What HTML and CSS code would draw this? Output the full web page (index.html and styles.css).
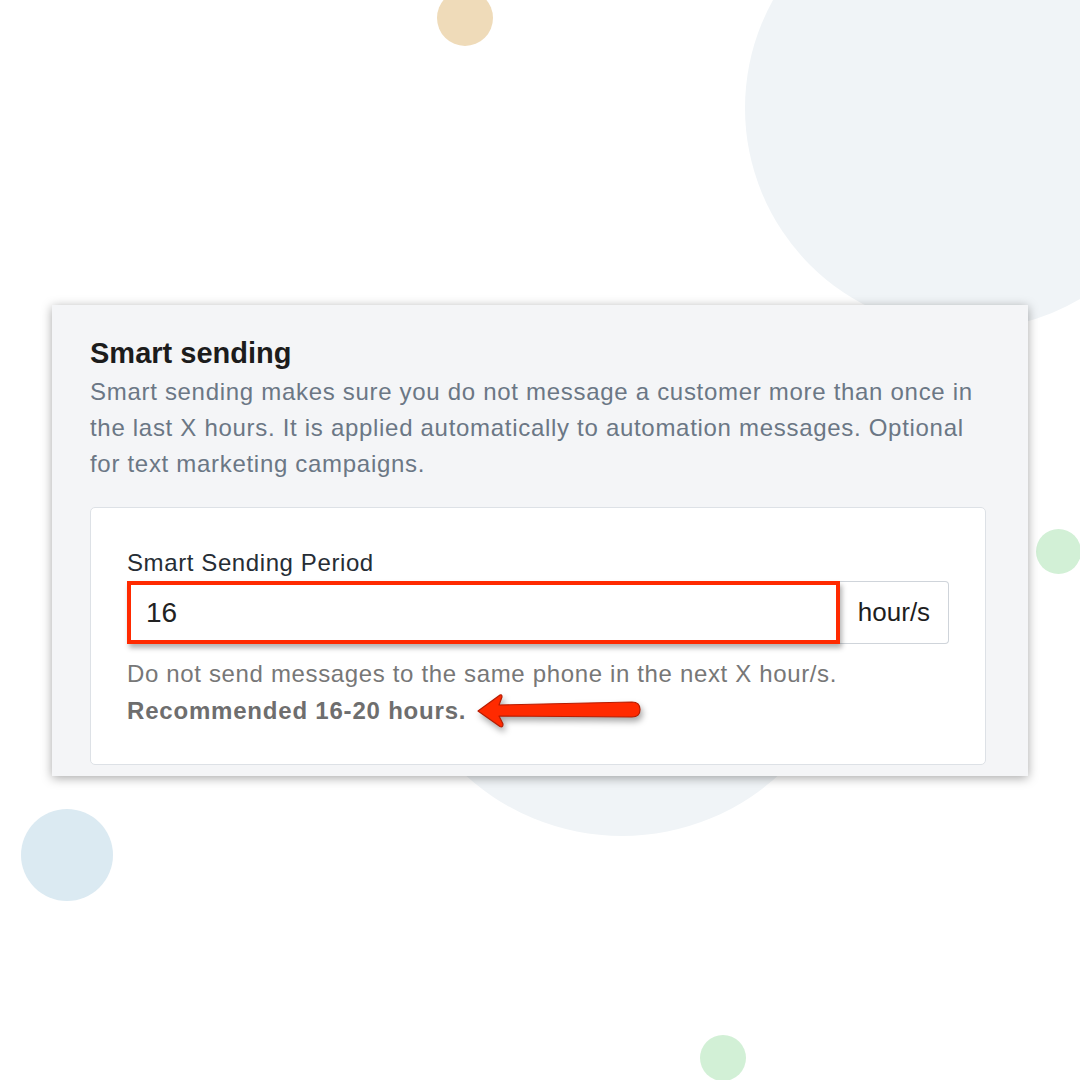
FILE: index.html
```html
<!DOCTYPE html>
<html lang="en">

<head>
    <meta charset="UTF-8">
    <meta name="viewport" content="width=device-width, initial-scale=1.0">
    <title>Smart sending</title>
    <link rel="stylesheet" href="styles.css">
</head>

<body>
    <div class="dots">
        <span class="dot dot-tan"></span>
        <span class="dot dot-big"></span>
        <span class="dot dot-mid"></span>
        <span class="dot dot-green-right"></span>
        <span class="dot dot-green-bottom"></span>
        <span class="dot dot-blue"></span>
    </div>

    <section class="panel">
        <h2>Smart sending</h2>
        <p class="intro">Smart sending makes sure you do not message a customer more than once in
            the last X hours. It is applied automatically to automation messages. Optional
            for text marketing campaigns.</p>

        <div class="card">
            <label class="field-label" for="period">Smart Sending Period</label>
            <div class="input-group">
                <input id="period" class="field-input" type="text" value="16">
                <span class="addon">hour/s</span>
            </div>
            <p class="help">Do not send messages to the same phone in the next X hour/s.</p>
            <p class="help help-strong">
                <b>Recommended 16-20 hours.</b>
                <svg class="arrow" width="170" height="40" viewBox="0 0 170 40">
                    <path d="M3 20 L25 4 Q27 3 27 6 L24 14 L157 11 Q165 11 165 18.5 Q165 26 157 26 L24 25 L28 33 Q28 37 25 35.5 Z"
                        fill="#ff2a00" stroke="#b81c00" stroke-width="1.2" stroke-linejoin="round" />
                </svg>
            </p>
        </div>
    </section>
</body>

</html>
```

FILE: styles.css
```css
html,
body {
    margin: 0px;
}

body {
    width: 1080px;
    height: 1080px;
    position: relative;
    background: #ffffff;
    font-family: "Liberation Sans", Arial, sans-serif;
}

.dots {
    position: absolute;
    inset: 0;
    overflow: hidden;
}

.dot {
    position: absolute;
    border-radius: 50%;
}

.dot-tan {
    left: 437px;
    top: -10px;
    width: 56px;
    height: 56px;
    background: #efdbb9;
}

.dot-big {
    left: 745px;
    top: -114px;
    width: 444px;
    height: 444px;
    background: #f0f4f7;
}

.dot-mid {
    left: 390px;
    top: 372px;
    width: 464px;
    height: 464px;
    background: #f0f4f7;
}

.dot-green-right {
    left: 1036px;
    top: 529px;
    width: 45px;
    height: 45px;
    background: #d2f0d6;
}

.dot-green-bottom {
    left: 700px;
    top: 1035px;
    width: 46px;
    height: 46px;
    background: #d2f0d6;
}

.dot-blue {
    left: 21px;
    top: 809px;
    width: 92px;
    height: 92px;
    background: #dbeaf2;
}

.panel {
    position: relative;
    margin: 305px 0 0 52px;
    width: 976px;
    box-sizing: border-box;
    padding: 31px 42px 11px 38px;
    background: #f4f5f7;
    box-shadow: 0px 2px 10px rgba(0, 0, 0, 0.35);
}

.panel h2 {
    margin: 0;
    font-size: 29px;
    line-height: 34px;
    color: #1c1c1c;
}

.intro {
    margin: 4px 0 25px 0;
    font-size: 24px;
    line-height: 36px;
    letter-spacing: 0.7px;
    color: #6b7785;
}

.card {
    background: #ffffff;
    border: 1px solid #dde1e6;
    border-radius: 5px;
    padding: 40px 36px 35px 36px;
}

.field-label {
    display: block;
    font-size: 24px;
    line-height: 30px;
    letter-spacing: 0.6px;
    color: #262d35;
    margin-bottom: 3px;
}

.input-group {
    display: flex;
    width: 822px;
    height: 63px;
}

.field-input {
    flex: 1;
    margin: 0;
    padding: 0 0 0 15px;
    border: 4px solid #ff2a00;
    outline: none;
    font-family: inherit;
    font-size: 28px;
    color: #222222;
    background: #ffffff;
    box-shadow: 2px 4px 5px rgba(0, 0, 0, 0.3);
    position: relative;
    z-index: 1;
}

.addon {
    display: flex;
    align-items: center;
    justify-content: center;
    width: 108px;
    border: 1px solid #cfd4da;
    border-left: none;
    border-radius: 0 4px 4px 0;
    font-size: 26px;
    color: #1e1e1e;
}

.help {
    margin: 0;
    font-size: 24px;
    line-height: 37px;
    letter-spacing: 0.65px;
    color: #777777;
}

.help:first-of-type {
    margin-top: 11px;
}

.help-strong {
    display: flex;
    align-items: center;
    letter-spacing: 0.8px;
    color: #6e6e6e;
}

.arrow {
    margin: -2px 0 -2px 9px;
    filter: drop-shadow(2px 4px 3px rgba(0, 0, 0, 0.35));
}
```
